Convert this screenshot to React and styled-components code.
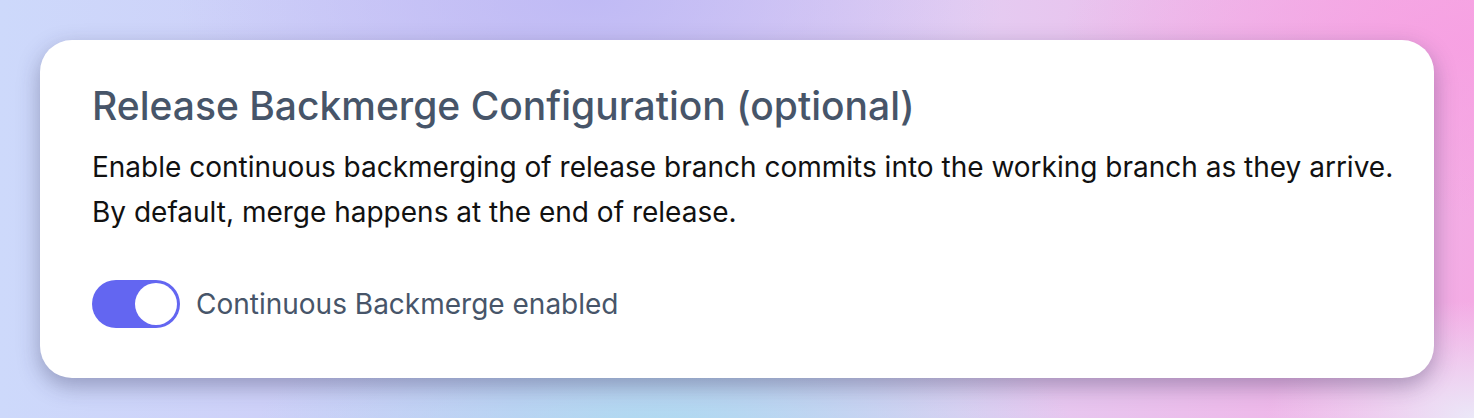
import React, { useState } from "react";
import styled, { createGlobalStyle } from "styled-components";

const GlobalStyle = createGlobalStyle`
  html, body {
    margin: 0;
    padding: 0;
  }
  body {
    font-family: Inter, "Noto Sans", sans-serif;
    -webkit-font-smoothing: antialiased;
  }
`;

const App = () => {
  const [enabled, setEnabled] = useState(true);

  return (
    <Page>
      <GlobalStyle />
      <Card>
        <Title>Release Backmerge Configuration (optional)</Title>
        <Description>
          Enable continuous backmerging of release branch commits into the
          working branch as they arrive.
          <br />
          By default, merge happens at the end of release.
        </Description>
        <ToggleRow>
          <Switch
            type="button"
            role="switch"
            aria-checked={enabled}
            $on={enabled}
            onClick={() => setEnabled(!enabled)}
          >
            <Knob $on={enabled} />
          </Switch>
          <ToggleLabel>Continuous Backmerge enabled</ToggleLabel>
        </ToggleRow>
      </Card>
    </Page>
  );
};

export default App;

const Page = styled.div`
  width: 1474px;
  height: 418px;
  box-sizing: border-box;
  padding: 40px;
  overflow: hidden;
  background:
    radial-gradient(ellipse 40% 60% at 100% 10%, rgba(247, 160, 226, 0.9), transparent 70%),
    radial-gradient(ellipse 40% 50% at 45% 105%, rgba(168, 220, 240, 0.95), transparent 70%),
    radial-gradient(ellipse 40% 60% at 40% 0%, rgba(190, 185, 245, 0.9), transparent 70%),
    radial-gradient(ellipse 20% 40% at 100% 100%, rgba(235, 232, 248, 1), transparent 70%),
    linear-gradient(90deg, #cdd9fb 0%, #cfc9f6 35%, #e4cdf2 65%, #f4abe4 100%);
`;

const Card = styled.div`
  box-sizing: border-box;
  height: 338px;
  background: #ffffff;
  border-radius: 32px;
  padding: 42px 40px 42px 52px;
  box-shadow: 0 8px 22px rgba(40, 40, 80, 0.35);
  display: flex;
  flex-direction: column;
`;

const Title = styled.h2`
  margin: 0;
  font-size: 39px;
  line-height: 48px;
  font-weight: 500;
  color: #475569;
`;

const Description = styled.p`
  margin: 15px 0 0;
  font-size: 28px;
  line-height: 45px;
  font-weight: 400;
  color: #111111;
  white-space: nowrap;
`;

const ToggleRow = styled.div`
  margin-top: 45px;
  display: flex;
  align-items: center;
  gap: 16px;
`;

const Switch = styled.button`
  width: 88px;
  height: 48px;
  border: none;
  border-radius: 24px;
  padding: 3px;
  background: ${(p) => (p.$on ? "#6366f1" : "#cbd5e1")};
  display: flex;
  justify-content: ${(p) => (p.$on ? "flex-end" : "flex-start")};
  align-items: center;
  cursor: pointer;
`;

const Knob = styled.span`
  width: 42px;
  height: 42px;
  border-radius: 50%;
  background: #ffffff;
`;

const ToggleLabel = styled.span`
  font-size: 28px;
  color: #475569;
`;
